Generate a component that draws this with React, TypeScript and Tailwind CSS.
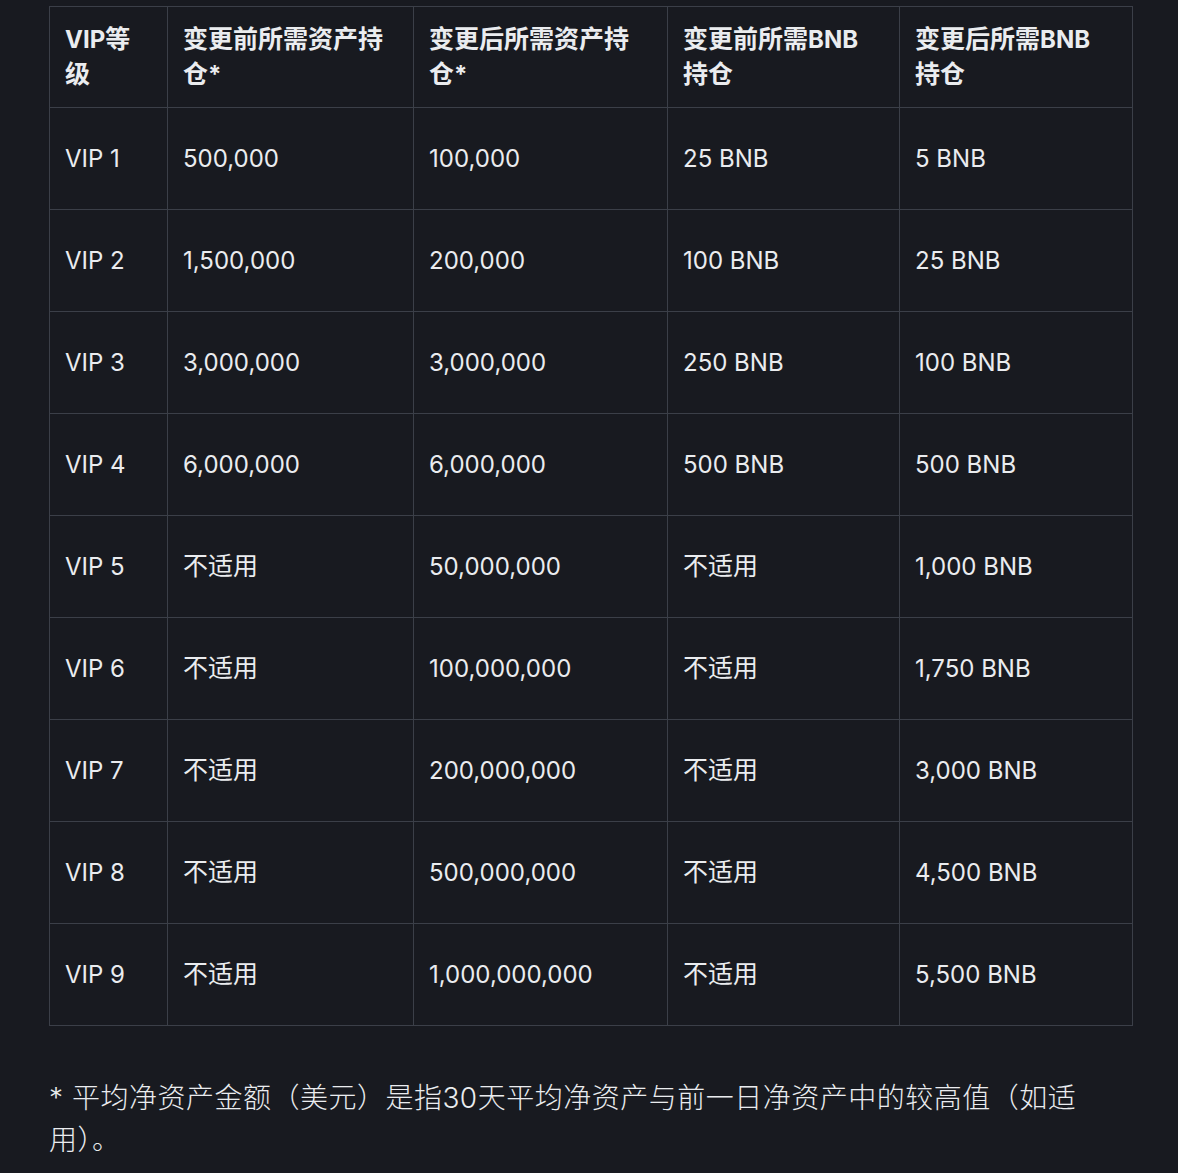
import React from "react";

const rows: [string, string, string, string, string][] = [
  ["VIP 1", "500,000", "100,000", "25 BNB", "5 BNB"],
  ["VIP 2", "1,500,000", "200,000", "100 BNB", "25 BNB"],
  ["VIP 3", "3,000,000", "3,000,000", "250 BNB", "100 BNB"],
  ["VIP 4", "6,000,000", "6,000,000", "500 BNB", "500 BNB"],
  ["VIP 5", "不适用", "50,000,000", "不适用", "1,000 BNB"],
  ["VIP 6", "不适用", "100,000,000", "不适用", "1,750 BNB"],
  ["VIP 7", "不适用", "200,000,000", "不适用", "3,000 BNB"],
  ["VIP 8", "不适用", "500,000,000", "不适用", "4,500 BNB"],
  ["VIP 9", "不适用", "1,000,000,000", "不适用", "5,500 BNB"],
];

const headers: [string, string][] = [
  ["VIP等", "级"],
  ["变更前所需资产持", "仓*"],
  ["变更后所需资产持", "仓*"],
  ["变更前所需BNB", "持仓"],
  ["变更后所需BNB", "持仓"],
];

const CJK = /[\u3000-\u9fff\uff00-\uffef]/;

function Mixed({ text }: { text: string }) {
  const parts = text.split(/([\u3000-\u9fff\uff00-\uffef]+)/).filter((p) => p.length > 0);
  return (
    <>
      {parts.map((p, i) =>
        CJK.test(p) ? (
          <span key={i} className="text-[25px]">
            {p}
          </span>
        ) : (
          <span key={i}>{p}</span>
        )
      )}
    </>
  );
}

export default function App() {
  return (
    <div
      className="min-h-[1173px] w-full bg-[#181a20] text-[#eaecef] pl-[49px] pt-[6px]"
      style={{ fontFamily: 'Inter, "Noto Sans CJK SC", sans-serif' }}
    >
      <table className="w-[1083px] table-fixed border-collapse">
        <colgroup>
          <col className="w-[118px]" />
          <col className="w-[246px]" />
          <col className="w-[254px]" />
          <col className="w-[232px]" />
          <col className="w-[233px]" />
        </colgroup>
        <thead>
          <tr>
            {headers.map((h) => (
              <th
                key={h[0]}
                className="border border-[#3b3f48] px-[15px] py-[15px] text-left align-top text-[24px] leading-[35px] font-bold"
              >
                <div className="whitespace-nowrap">
                  <Mixed text={h[0]} />
                </div>
                <div className="whitespace-nowrap">
                  <Mixed text={h[1]} />
                </div>
              </th>
            ))}
          </tr>
        </thead>
        <tbody>
          {rows.map((r) => (
            <tr key={r[0]}>
              {r.map((c, i) => (
                <td
                  key={i}
                  className="border border-[#3b3f48] px-[15px] py-[33px] text-left align-middle text-[24px] leading-[35px] font-normal"
                >
                  <Mixed text={c} />
                </td>
              ))}
            </tr>
          ))}
        </tbody>
      </table>
      <p className="mt-[51px] w-[1084px] text-[28px] leading-[42px] font-light tracking-[0.5px]">
        * 平均净资产金额（美元）是指30天平均净资产与前一日净资产中的较高值（如适用）。
      </p>
    </div>
  );
}
